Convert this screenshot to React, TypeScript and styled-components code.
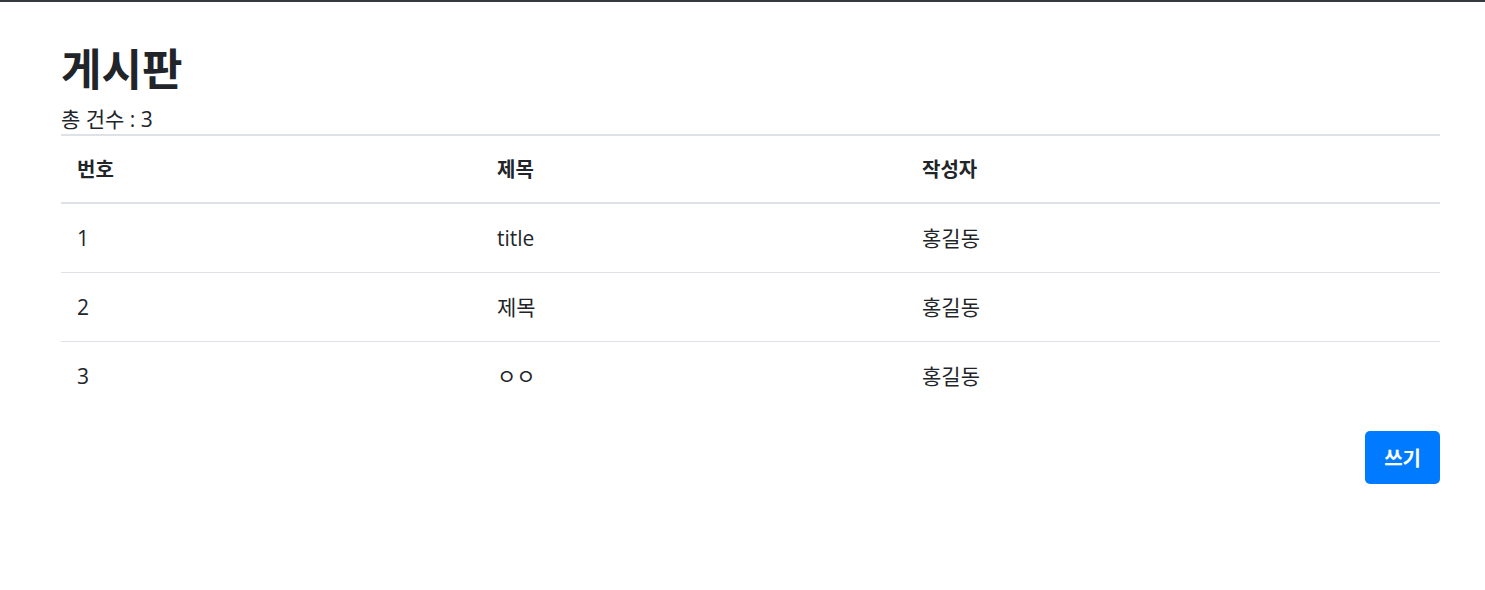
import React from "react";
import styled, { createGlobalStyle } from "styled-components";

const Global = createGlobalStyle`
  html, body { margin: 0; padding: 0; background: #fff; }
  *, *::before, *::after { box-sizing: border-box; }
  body {
    font-family: "Open Sans", "Noto Sans CJK KR", sans-serif;
    font-size: 21px;
    line-height: 30px;
    color: #212529;
    border-top: 2px solid #343a40;
  }
`;

const Page = styled.main`
  padding: 0 45px 40px 61px;
`;

const Title = styled.h1`
  margin: 39px 0 0;
  font-size: 44px;
  font-weight: 700;
  line-height: 53px;
  font-family: "Noto Sans CJK KR", sans-serif;
`;

const Count = styled.div`
  margin-top: 10px;
  line-height: 30px;
`;

const Table = styled.table`
  width: 100%;
  border-collapse: collapse;
  table-layout: fixed;
`;

const Th = styled.th<{ $w?: number }>`
  width: ${(p) => (p.$w ? `${p.$w}px` : "auto")};
  text-align: left;
  font-weight: 700;
  font-size: 20px;
  padding: 18px 16px;
  line-height: 30px;
  border-top: 2px solid #dee2e6;
  border-bottom: 2px solid #dee2e6;
  font-family: "Noto Sans CJK KR", sans-serif;
`;

const Td = styled.td`
  padding: 19px 16px;
  line-height: 30px;
  border-bottom: 1px solid #dee2e6;
`;

const Row = styled.tr`
  &:last-child td { border-bottom: none; }
`;

const Actions = styled.div`
  display: flex;
  justify-content: flex-end;
  margin-top: 21px;
`;

const Button = styled.button`
  background: #007bff;
  color: #fff;
  border: 0;
  border-radius: 5px;
  padding: 11px 19px;
  font-size: 20px;
  font-weight: 700;
  line-height: 31px;
  font-family: "Noto Sans CJK KR", sans-serif;
  cursor: pointer;
`;

const rows = [
  { id: 1, title: "title", author: "홍길동" },
  { id: 2, title: "제목", author: "홍길동" },
  { id: 3, title: "ㅇㅇ", author: "홍길동" },
];

export default function App() {
  return (
    <>
      <Global />
      <Page>
        <Title>게시판</Title>
        <Count>총 건수 : 3</Count>
        <Table>
          <thead>
            <tr>
              <Th $w={420}>번호</Th>
              <Th $w={425}>제목</Th>
              <Th>작성자</Th>
            </tr>
          </thead>
          <tbody>
            {rows.map((r) => (
              <Row key={r.id}>
                <Td>{r.id}</Td>
                <Td>{r.title}</Td>
                <Td>{r.author}</Td>
              </Row>
            ))}
          </tbody>
        </Table>
        <Actions>
          <Button>쓰기</Button>
        </Actions>
      </Page>
    </>
  );
}
